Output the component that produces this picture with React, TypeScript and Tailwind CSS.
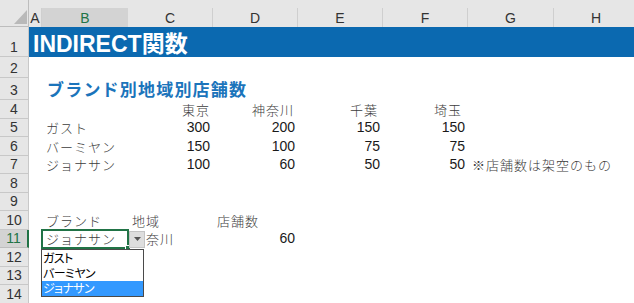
import React from "react";

const cjk = "font-['Noto_Sans_CJK_JP','Noto_Sans_CJK_SC',sans-serif]";
const latin = "font-['Liberation_Sans','Noto_Sans_CJK_JP',sans-serif]";

function RowHead({ n, active = false }: { n: number; active?: boolean }) {
  return (
    <div
      className={`w-[29px] shrink-0 flex items-end justify-center pb-[1px] border-b border-r text-[14px] leading-[16px] ${latin} ${
        active
          ? "bg-[#d3d3d3] text-[#217346] border-b-[#bdbdbd] border-r-2 border-r-[#217346]"
          : "bg-[#e6e6e6] text-[#333] border-[#c8c8c8]"
      }`}
    >
      {n}
    </div>
  );
}

function ColHead({ label, w, active = false }: { label: string; w: string; active?: boolean }) {
  return (
    <div className={`${w} shrink-0 h-full flex flex-col`}>
      <div
        className={`flex-1 flex items-center justify-center text-[14px] ${latin} ${
          active ? "bg-[#d3d3d3] text-[#217346] border-b-2 border-[#217346]" : "text-[#333] border-r border-[#cfcfcf] border-b border-b-[#bdbdbd]"
        }`}
      >
        {label}
      </div>
    </div>
  );
}

// a single worksheet cell, bottom aligned like the spreadsheet grid
function Cell({
  w,
  right = false,
  cls = "",
  children,
}: {
  w: string;
  right?: boolean;
  cls?: string;
  children?: React.ReactNode;
}) {
  return (
    <div
      className={`${w} shrink-0 flex items-end whitespace-nowrap overflow-visible pb-[1px] ${
        right ? "justify-end pr-[3px]" : "pl-[4px]"
      } ${cls}`}
    >
      {children}
    </div>
  );
}

const jp = `${cjk} font-light text-[13px] leading-[17px] tracking-[1px] text-[#3c3c3c]`;
const jpRight = `${cjk} font-light text-[13px] leading-[17px] tracking-[1px] text-[#3c3c3c] mr-[-1px]`;
const num = `${latin} text-[14px] leading-[17px] text-[#1a1a1a]`;

function DataRow({
  n,
  name,
  vals,
  note,
}: {
  n: number;
  name: string;
  vals: string[];
  note?: string;
}) {
  return (
    <div className="flex h-[18.5px]">
      <RowHead n={n} />
      <Cell w="w-[13px]" />
      <Cell w="w-[86px]" cls={jp}>
        {name}
      </Cell>
      <Cell w="w-[85px]" right cls={num}>
        {vals[0]}
      </Cell>
      <Cell w="w-[85px]" right cls={num}>
        {vals[1]}
      </Cell>
      <Cell w="w-[85px]" right cls={num}>
        {vals[2]}
      </Cell>
      <Cell w="w-[85px]" right cls={num}>
        {vals[3]}
      </Cell>
      <Cell w="w-[86px]" cls={`${jp} pl-[2px] tracking-[1.5px]`}>
        {note}
      </Cell>
    </div>
  );
}

function EmptyRow({ n }: { n: number }) {
  return (
    <div className="flex h-[18.5px]">
      <RowHead n={n} />
    </div>
  );
}

export default function App() {
  return (
    <div className="relative w-[634px] h-[303px] overflow-hidden bg-white select-none">
      {/* column headers */}
      <div className="flex h-[27px] bg-[#e6e6e6]">
        <div className="w-[29px] shrink-0 relative border-r border-b border-[#bdbdbd]">
          <svg className="absolute left-[14px] top-[10px]" width="13" height="14" viewBox="0 0 13 14">
            <polygon points="13,0 13,14 0,14" fill="#b9b9b9" />
          </svg>
        </div>
        <div className="flex-1 flex pt-[8px] h-full">
          <ColHead label="A" w="w-[13px]" />
          <ColHead label="B" w="w-[86px]" active />
          <ColHead label="C" w="w-[85px]" />
          <ColHead label="D" w="w-[85px]" />
          <ColHead label="E" w="w-[85px]" />
          <ColHead label="F" w="w-[85px]" />
          <ColHead label="G" w="w-[86px]" />
          <ColHead label="H" w="w-[85px]" />
        </div>
      </div>

      {/* row 1: banner title */}
      <div className="flex h-[30px]">
        <RowHead n={1} />
        <div className="flex-1 bg-[#0b69b0] flex items-center pl-[4px] pt-[2px]">
          <span className={`${latin} font-bold text-[23px] leading-[26px] text-white`}>
            INDIRECT<span className={cjk}>関数</span>
          </span>
        </div>
      </div>

      <div className="flex h-[21px]">
        <RowHead n={2} />
      </div>

      {/* row 3: table heading */}
      <div className="flex h-[22px]">
        <RowHead n={3} />
        <Cell w="w-[13px]" />
        <Cell w="w-[86px]" cls={`${cjk} font-bold text-[17px] leading-[20px] tracking-[1.2px] text-[#1b74bb] pl-[5px]`}>
          ブランド別地域別店舗数
        </Cell>
      </div>

      {/* row 4: region headers */}
      <div className="flex h-[18.5px]">
        <RowHead n={4} />
        <Cell w="w-[13px]" />
        <Cell w="w-[86px]" />
        <Cell w="w-[85px]" right cls={jpRight}>
          東京
        </Cell>
        <Cell w="w-[85px]" right cls={jpRight}>
          神奈川
        </Cell>
        <Cell w="w-[85px]" right cls={jpRight}>
          千葉
        </Cell>
        <Cell w="w-[85px]" right cls={jpRight}>
          埼玉
        </Cell>
      </div>

      <DataRow n={5} name="ガスト" vals={["300", "200", "150", "150"]} />
      <DataRow n={6} name="バーミヤン" vals={["150", "100", "75", "75"]} />
      <DataRow n={7} name="ジョナサン" vals={["100", "60", "50", "50"]} note="※店舗数は架空のもの" />
      <EmptyRow n={8} />
      <EmptyRow n={9} />

      {/* row 10: lookup labels */}
      <div className="flex h-[18.5px]">
        <RowHead n={10} />
        <Cell w="w-[13px]" />
        <Cell w="w-[86px]" cls={jp}>
          ブランド
        </Cell>
        <Cell w="w-[85px]" cls={`${jp} pl-[3px]`}>
          地域
        </Cell>
        <Cell w="w-[85px]" cls={`${jp} pl-[4px]`}>
          店舗数
        </Cell>
      </div>

      {/* row 11: lookup inputs */}
      <div className="relative flex h-[18.5px]">
        <RowHead n={11} active />
        <Cell w="w-[13px]" />
        <Cell w="w-[86px]" cls={jp}>
          ジョナサン
        </Cell>
        <Cell w="w-[85px]" cls={`${jp} pl-[3px]`}>
          神奈川
        </Cell>
        <Cell w="w-[85px]" right cls={num}>
          60
        </Cell>

        {/* active cell outline with fill handle */}
        <div className="absolute left-[41px] top-[-1px] w-[88px] h-[20px] border-2 border-[#217346] pointer-events-none">
          <div className="absolute right-[-4px] bottom-[-4px] w-[6px] h-[6px] bg-[#217346] border border-white" />
        </div>

        {/* list validation button */}
        <div className="absolute left-[129px] top-[1px] w-[16px] h-[17px] bg-[#dedede] border border-[#c4c4c4] flex items-center justify-center">
          <svg width="7" height="4" viewBox="0 0 7 4">
            <polygon points="0,0 7,0 3.5,4" fill="#555" />
          </svg>
        </div>
      </div>

      <EmptyRow n={12} />
      <EmptyRow n={13} />
      <EmptyRow n={14} />

      {/* open validation list */}
      <div className="absolute left-[41px] top-[249px] w-[103px] h-[48px] bg-white border border-[#4a4a4a] flex flex-col">
        {["ガスト", "バーミヤン", "ジョナサン"].map((item, i) => (
          <div
            key={item}
            className={`h-[15.33px] flex items-center pl-[1px] ${cjk} text-[12px] leading-[14px] tracking-[-0.6px] [font-feature-settings:'palt'] ${
              i === 2 ? "bg-[#3399ff] text-white" : "text-black"
            }`}
          >
            {item}
          </div>
        ))}
      </div>
    </div>
  );
}
